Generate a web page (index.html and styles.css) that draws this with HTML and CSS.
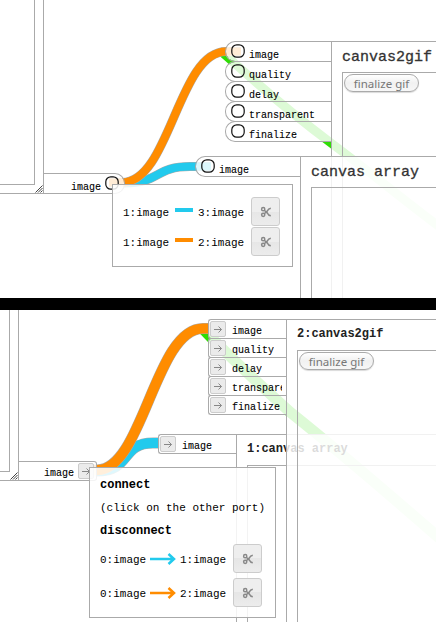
FILE: index.html
```
<!DOCTYPE html>
<html lang="en">
<head>
<meta charset="utf-8">
<title>Patch editor</title>
<link rel="stylesheet" href="styles.css">
</head>
<body>
<svg class="defs" width="0" height="0">
  <symbol id="ring" viewBox="0 0 14 14"><rect x=".8" y=".8" width="12.4" height="12.4" rx="5" fill="none" stroke="#111" stroke-width="1.200"/></symbol>
  <symbol id="arrow" viewBox="0 0 14 14"><path d="M3 7.5H10.5M7.5 4.5L10.5 7.5L7.5 10.5" fill="none" stroke="#888" stroke-width="1"/></symbol>
  <symbol id="cut" viewBox="0 0 12 12"><g fill="none" stroke="#888" stroke-width="1.500"><circle cx="3.200" cy="3.200" r="1.600"/><circle cx="3.200" cy="8.800" r="1.600"/><path d="M4.500 4.500L7 6.600Q8.500 9.500 10.800 9.800M4.500 7.500L7 5.400Q8.500 2.500 10.800 2.200"/></g></symbol>
  <symbol id="grip" viewBox="0 0 8 8"><path d="M.5 7.5L7.5 .5M3 7.5L7.5 3M5.5 7.5L7.5 5.5" stroke="#444" stroke-width="1"/></symbol>
</svg>

<main class="sheet">
  <section class="scene round">
    <svg class="wires" viewBox="0 0 436 298" fill="none">
      <path class="green" d="M223 53C240 68 275 101 331 143C370 172 405 201 445 231" stroke-width="9"/>
      <path class="edge" d="M109 183H125C160 183 155 166.500 190 166.500H211" stroke-width="9"/>
      <path class="blue" d="M109 183H125C160 183 155 166.500 190 166.500H211" stroke-width="8"/>
      <path class="edge" d="M109 182.500H122C170 182.500 178 51.500 226 51.500H241" stroke-width="9"/>
      <path class="orange" d="M109 182.500H122C170 182.500 178 51.500 226 51.500H241" stroke-width="8"/>
    </svg>

    <div class="source source-a"><div class="pane"></div><svg class="grip"><use href="#grip"/></svg></div>
    <div class="port out out-a"><span>image</span><svg class="ring"><use href="#ring"/></svg></div>

    <article class="node gif-a">
      <div class="ports">
        <div class="port"><svg class="ring"><use href="#ring"/></svg><span>image</span></div>
        <div class="port"><svg class="ring"><use href="#ring"/></svg><span>quality</span></div>
        <div class="port"><svg class="ring"><use href="#ring"/></svg><span>delay</span></div>
        <div class="port"><svg class="ring"><use href="#ring"/></svg><span>transparent</span></div>
        <div class="port"><svg class="ring"><use href="#ring"/></svg><span>finalize</span></div>
      </div>
      <div class="body"><h2>canvas2gif</h2><div class="view"><button class="pill">finalize gif</button></div></div>
    </article>

    <article class="node array-a">
      <div class="ports">
        <div class="port"><svg class="ring"><use href="#ring"/></svg><span>image</span></div>
      </div>
      <div class="body"><h2>canvas array</h2><div class="view"></div></div>
    </article>

    <div class="popup popup-a">
      <div class="link"><span>1:image</span><i class="bar bar-blue"></i><span>3:image</span><button class="cut"><svg><use href="#cut"/></svg></button></div>
      <div class="link"><span>1:image</span><i class="bar bar-orange"></i><span>2:image</span><button class="cut"><svg><use href="#cut"/></svg></button></div>
    </div>
  </section>

  <div class="divider"></div>

  <section class="scene square">
    <svg class="wires" viewBox="0 0 436 312" fill="none">
      <path class="green" d="M204 20C222 39 250 66 290 102C340 142 390 185 445 233" stroke-width="11"/>
      <path class="edge" d="M85 161H97C132 161 120 133 153 133H167" stroke-width="11"/>
      <path class="blue" d="M85 161H97C132 161 120 133 153 133H167" stroke-width="10"/>
      <path class="edge" d="M85 160H97C143 160 155 18.500 203 18.500H217" stroke-width="11"/>
      <path class="orange" d="M85 160H97C143 160 155 18.500 203 18.500H217" stroke-width="10"/>
    </svg>

    <div class="source source-b"><div class="pane"></div><svg class="grip"><use href="#grip"/></svg></div>
    <div class="port out out-b"><span>image</span><b class="key"><svg><use href="#arrow"/></svg></b></div>

    <article class="node array-b">
      <div class="ports">
        <div class="port"><b class="key"><svg><use href="#arrow"/></svg></b><span>image</span></div>
      </div>
      <div class="body"><h2>1:canvas array</h2><div class="view"></div></div>
    </article>

    <article class="node gif-b">
      <div class="ports">
        <div class="port"><b class="key"><svg><use href="#arrow"/></svg></b><span>image</span></div>
        <div class="port"><b class="key"><svg><use href="#arrow"/></svg></b><span>quality</span></div>
        <div class="port"><b class="key"><svg><use href="#arrow"/></svg></b><span>delay</span></div>
        <div class="port"><b class="key"><svg><use href="#arrow"/></svg></b><span>transparent</span></div>
        <div class="port"><b class="key"><svg><use href="#arrow"/></svg></b><span>finalize</span></div>
      </div>
      <div class="body"><h2>2:canvas2gif</h2><div class="view"><button class="pill">finalize gif</button></div></div>
    </article>

    <div class="popup popup-b">
      <h3>connect</h3>
      <p>(click on the other port)</p>
      <h3>disconnect</h3>
      <div class="link"><span>0:image</span><svg class="dart blue" viewBox="0 0 26 12"><path d="M0 6H24M18.500 1L24 6L18.500 11" fill="none" stroke-width="2.500"/></svg><span>1:image</span><button class="cut"><svg><use href="#cut"/></svg></button></div>
      <div class="link"><span>0:image</span><svg class="dart orange" viewBox="0 0 26 12"><path d="M0 6H24M18.500 1L24 6L18.500 11" fill="none" stroke-width="2.500"/></svg><span>2:image</span><button class="cut"><svg><use href="#cut"/></svg></button></div>
    </div>
  </section>
</main>
</body>
</html>
```
FILE: styles.css
```
* { box-sizing: border-box; }
body {
  margin: 0;
  background: #fff;
  color: #000;
  font: 10px "Liberation Mono", monospace;
}
h2, h3, p { margin: 0; }
button { padding: 0; font: inherit; }
svg { display: block; flex: none; }
.defs { position: absolute; }
.sheet { width: 436px; height: 622px; overflow: hidden; }
.scene { position: relative; overflow: hidden; }
.round { height: 298px; }
.square { height: 312px; }
.divider { height: 12px; background: #000; }

/* wires */
.wires { position: absolute; inset: 0; width: 100%; height: 100%; }
.green { stroke: #2fdc05; }
.blue { stroke: #22caed; }
.orange { stroke: #ff8c00; }
.edge { stroke: #aaa; }

/* canvas objects */
.node { position: absolute; display: flex; align-items: flex-start; }
.gif-a { left: 225px; top: 41px; width: 240px; height: 270px; }
.array-a { left: 195px; top: 156px; width: 270px; height: 160px; }
.gif-b { left: 208px; top: 9px; width: 250px; height: 320px; }
.array-b { left: 158px; top: 124px; width: 300px; height: 200px; }

.source {
  position: absolute;
  left: 0;
  top: 0;
  background: #fff;
  border: solid #aaa;
  border-width: 0 1px 1px 0;
  padding: 0 8px 8px 0;
}
.source-a { width: 44px; height: 194px; }
.source-b { width: 19px; height: 171px; }
.pane { height: 100%; border: solid #aaa; border-width: 0 1px 1px 0; }
.grip { position: absolute; right: 0; bottom: 0; width: 8px; height: 8px; }

/* ports */
.ports { flex: none; width: 106px; }
.array-a .ports { width: 105px; }
.square .ports { width: 78px; }
.port {
  display: flex;
  align-items: center;
  gap: 4px;
  height: 21px;
  padding-left: 5px;
  border: 1px solid #aaa;
  border-right: 0;
  border-radius: 10px 0 0 10px;
  background: rgba(255, 255, 255, .84);
  background-clip: padding-box;
  -webkit-text-stroke: .1px #000;
}
.port + .port { margin-top: -1px; }
.port span { padding-top: 8px; line-height: 12px; }
.ring { width: 14px; height: 14px; margin-top: -1px; }
.square .port { height: 20px; gap: 6px; padding: 0 4px 0 1px; border-radius: 3px 0 0 3px; }
.square .port span { padding-top: 5px; overflow: hidden; line-height: 13px; }
.key {
  flex: none;
  width: 16px;
  height: 16px;
  border: 1px solid #ccc;
  border-radius: 2px;
  background: #ebebeb;
}
.key svg { width: 14px; height: 14px; }
.scene .out {
  position: absolute;
  justify-content: flex-end;
  border: 1px solid #aaa;
  border-left: 0;
}
.out-a { left: 44px; top: 173px; width: 81px; padding-right: 5px; border-radius: 0 10px 10px 0; }
.square .out-b { left: 19px; top: 151px; width: 78px; gap: 4px; padding: 0 2px 0 0; border-radius: 0 3px 3px 0; }

/* object bodies */
.body {
  flex: 1;
  height: 100%;
  display: flex;
  flex-direction: column;
  padding-left: 10px;
  border: 1px solid #aaa;
  background: rgba(255, 255, 255, .84);
}
.body h2 {
  height: 30px;
  color: #333;
  font-size: 15px;
  font-weight: 400;
  line-height: 31px;
  -webkit-text-stroke: .3px #333;
}
.square .body h2 { color: #222; font-size: 12px; font-weight: 700; line-height: 28px; -webkit-text-stroke: 0; }
.view { flex: 1; padding: 1px; border: 1px solid #aaa; border-width: 1px 0 0 1px; }
.pill {
  display: block;
  width: 75px;
  height: 18px;
  border: 1px solid #aaa;
  border-radius: 9px;
  background: linear-gradient(#fff, #f1f1f1 50%, #f7f7f7);
  box-shadow: 0 1px 1px rgba(0, 0, 0, .15);
  color: #777;
  font: 11.500px/15px "Noto Sans", sans-serif;
}

/* connection popups */
.popup {
  position: absolute;
  border: 1px solid #aaa;
  background: rgba(255, 255, 255, .86);
  font-size: 11px;
}
.popup-a { left: 112px; top: 184px; width: 181px; height: 83px; padding: 12px 0 0 10px; }
.popup-b { left: 89px; top: 157px; width: 187px; height: 151px; padding: 5px 0 0 10px; }
.popup h3 { font-size: 12px; line-height: 24px; }
.popup p { line-height: 22px; }
.link { display: flex; align-items: center; height: 30px; }
.popup-b .link { height: 34px; }
.popup-b .link:nth-of-type(1) { margin-top: -1px; }
.link span { width: 47px; padding-top: 1px; }
.bar { width: 18px; height: 4px; margin: -5px 5px 0; }
.bar-blue { background: #22caed; }
.bar-orange { background: #ff8c00; }
.dart { width: 26px; height: 12px; margin: 0 4px 0 3px; }
.cut {
  display: flex;
  align-items: center;
  justify-content: center;
  width: 29px;
  height: 29px;
  margin: -1px 0 0 6px;
  border: 1px solid #ccc;
  border-radius: 3px;
  background: linear-gradient(#eee 50%, #e6e6e6 50%, #ececec);
}
.cut svg { width: 12px; height: 12px; }
```
